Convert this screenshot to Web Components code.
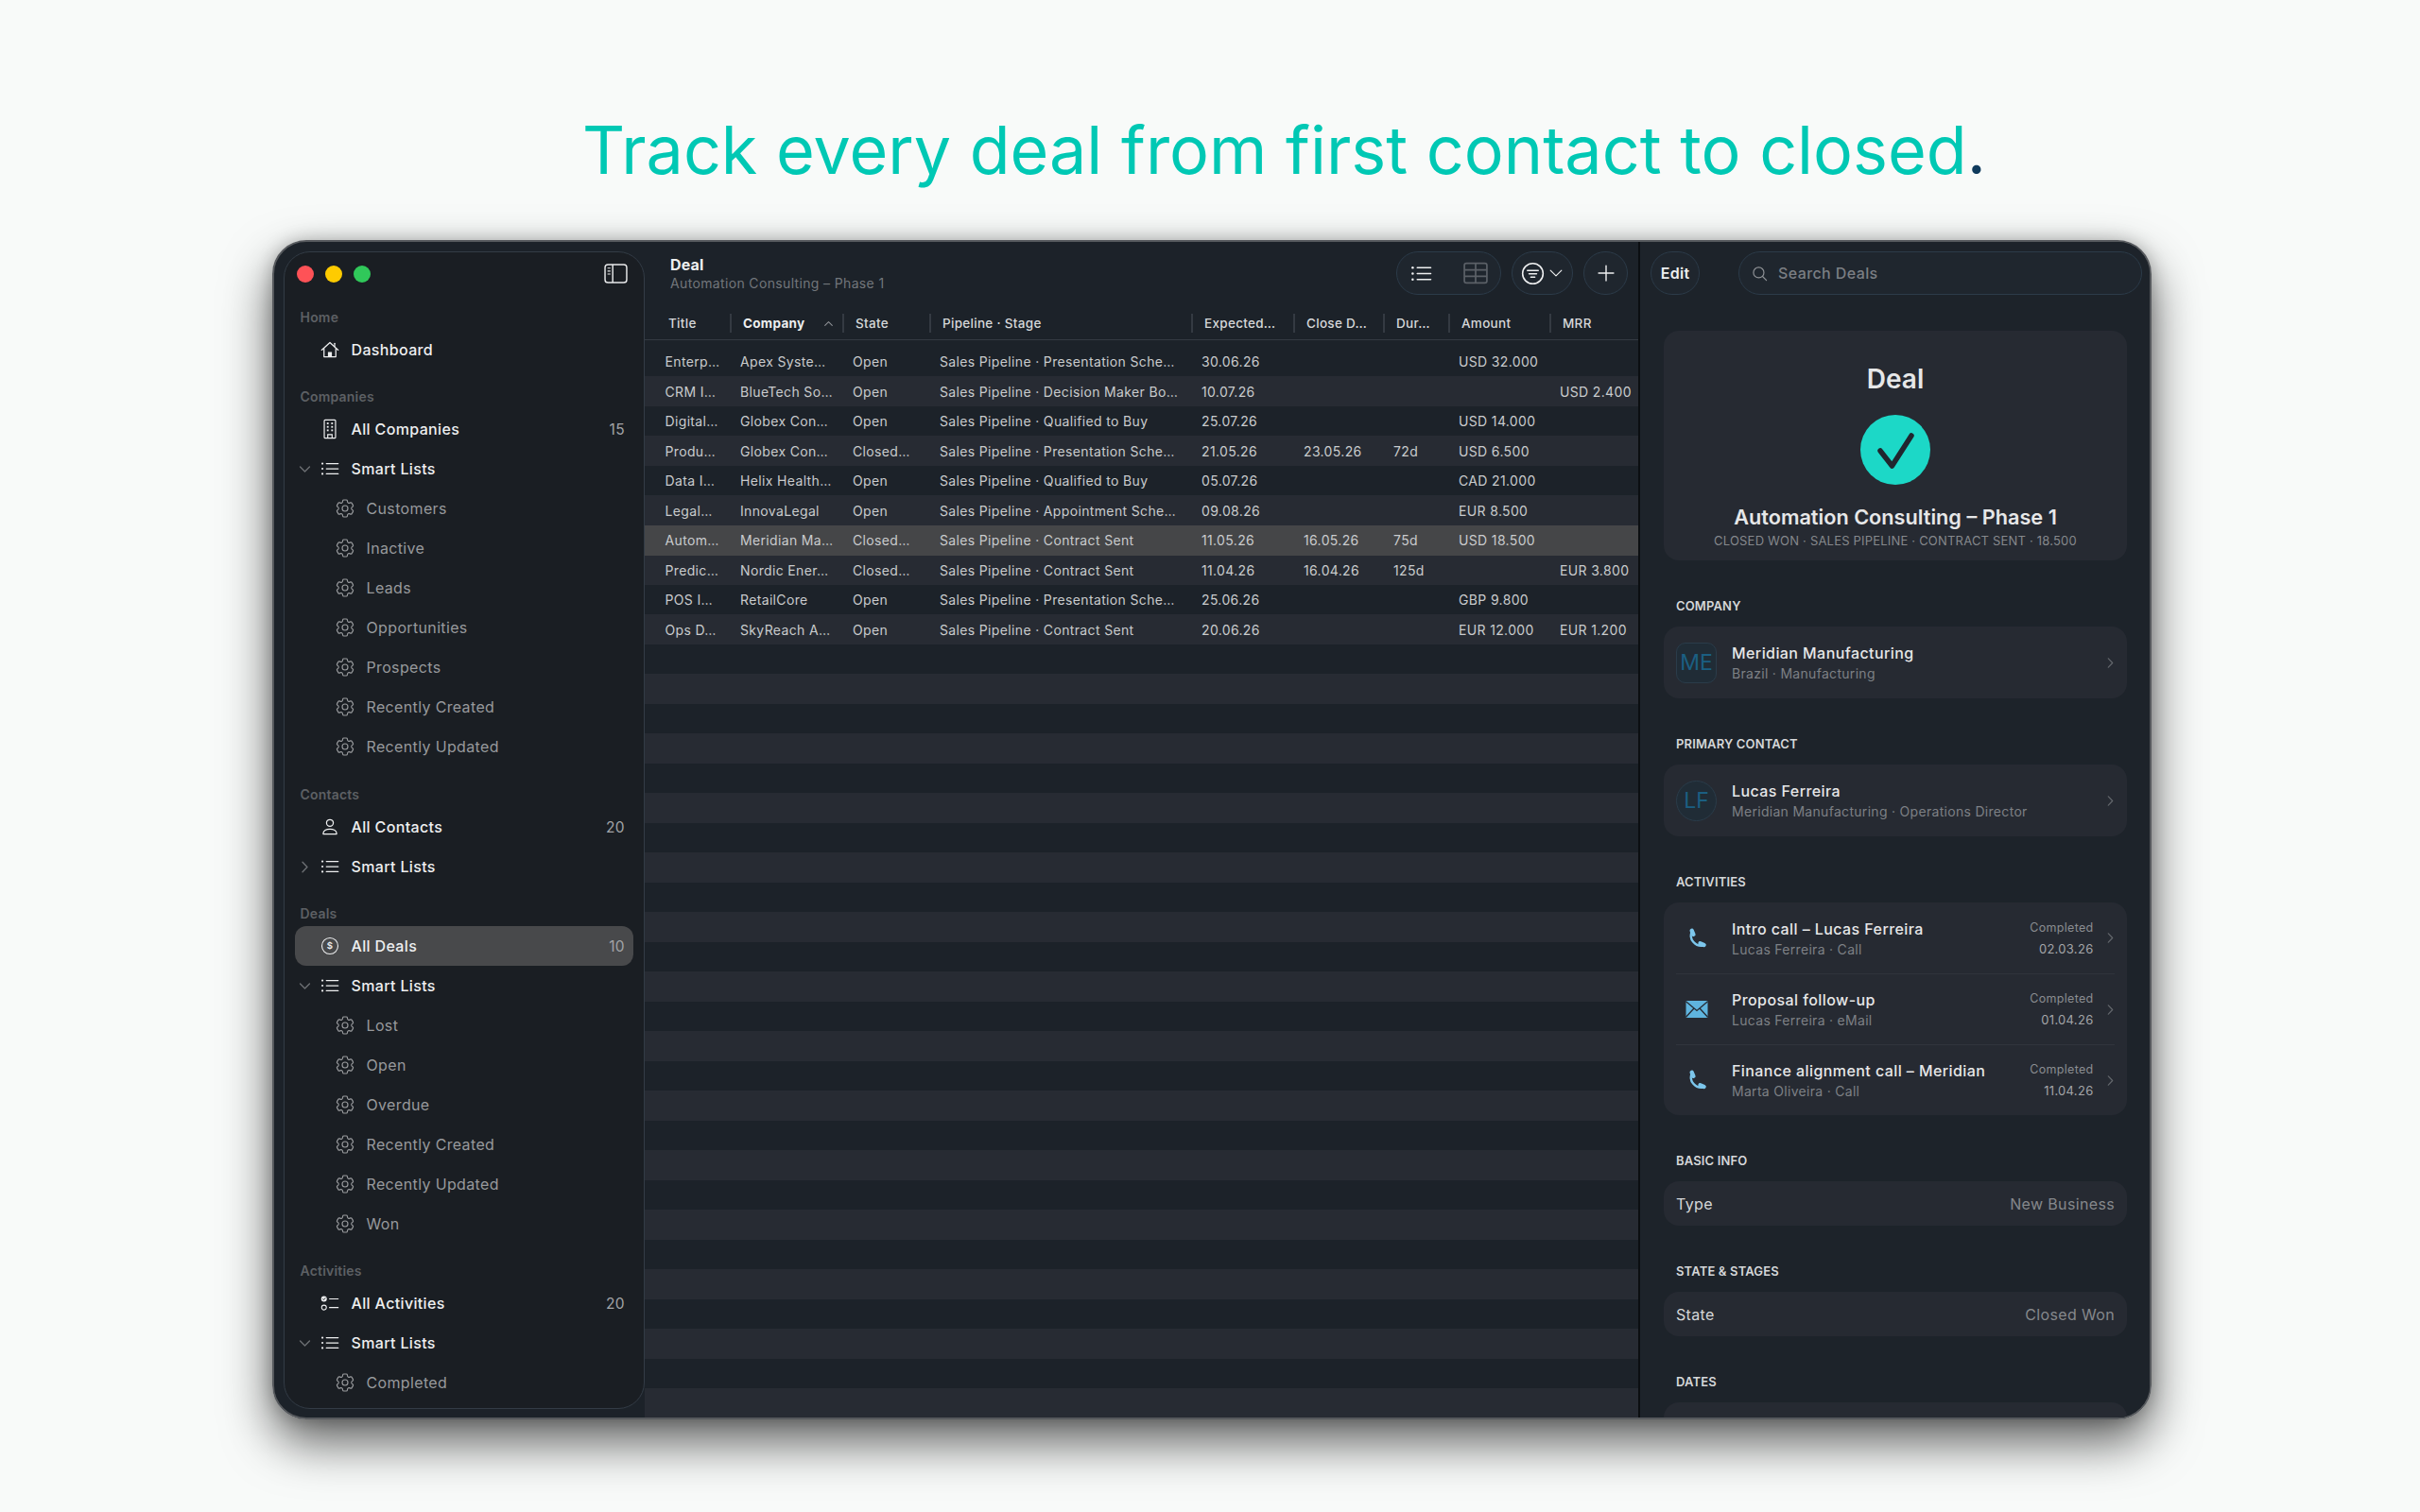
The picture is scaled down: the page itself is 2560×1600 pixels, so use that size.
<!DOCTYPE html>
<html lang="en">
<head>
<meta charset="utf-8">
<title>Deals</title>
<style>
  html, body { margin: 0; background: #f8faf9; }
  body { font-family: Inter, "Noto Sans", sans-serif; height: 1600px; overflow: hidden; }
</style>
</head>
<body>
<deal-page>
  <page-headline>Track every deal from first contact to closed</page-headline>
  <app-window>
    <app-sidebar slot="sidebar">
      <nav-section label="Home">
        <nav-item icon="house">Dashboard</nav-item>
      </nav-section>
      <nav-section label="Companies">
        <nav-item icon="building" count="15">All Companies</nav-item>
        <nav-item icon="list" chevron="down">Smart Lists</nav-item>
        <nav-item icon="gear" sub>Customers</nav-item>
        <nav-item icon="gear" sub>Inactive</nav-item>
        <nav-item icon="gear" sub>Leads</nav-item>
        <nav-item icon="gear" sub>Opportunities</nav-item>
        <nav-item icon="gear" sub>Prospects</nav-item>
        <nav-item icon="gear" sub>Recently Created</nav-item>
        <nav-item icon="gear" sub>Recently Updated</nav-item>
      </nav-section>
      <nav-section label="Contacts" style="margin-top: 17px">
        <nav-item icon="person" count="20">All Contacts</nav-item>
        <nav-item icon="list" chevron="right">Smart Lists</nav-item>
      </nav-section>
      <nav-section label="Deals">
        <nav-item icon="dollar" count="10" selected>All Deals</nav-item>
        <nav-item icon="list" chevron="down">Smart Lists</nav-item>
        <nav-item icon="gear" sub>Lost</nav-item>
        <nav-item icon="gear" sub>Open</nav-item>
        <nav-item icon="gear" sub>Overdue</nav-item>
        <nav-item icon="gear" sub>Recently Created</nav-item>
        <nav-item icon="gear" sub>Recently Updated</nav-item>
        <nav-item icon="gear" sub>Won</nav-item>
      </nav-section>
      <nav-section label="Activities">
        <nav-item icon="tasks" count="20">All Activities</nav-item>
        <nav-item icon="list" chevron="down">Smart Lists</nav-item>
        <nav-item icon="gear" sub>Completed</nav-item>
      </nav-section>
    </app-sidebar>
    <deal-list slot="main"></deal-list>
    <deal-detail slot="detail">
      <deal-hero></deal-hero>
      <detail-section label="Company">
        <detail-card>
          <link-row initials="ME" shape="square" title="Meridian Manufacturing" sub="Brazil · Manufacturing"></link-row>
        </detail-card>
      </detail-section>
      <detail-section label="Primary Contact">
        <detail-card>
          <link-row initials="LF" shape="round" title="Lucas Ferreira" sub="Meridian Manufacturing · Operations Director"></link-row>
        </detail-card>
      </detail-section>
      <detail-section label="Activities">
        <detail-card>
          <link-row icon="phone" title="Intro call – Lucas Ferreira" sub="Lucas Ferreira · Call" state="Completed" date="02.03.26"></link-row>
          <link-row icon="mail" divided title="Proposal follow-up" sub="Lucas Ferreira · eMail" state="Completed" date="01.04.26"></link-row>
          <link-row icon="phone" divided title="Finance alignment call – Meridian" sub="Marta Oliveira · Call" state="Completed" date="11.04.26"></link-row>
        </detail-card>
      </detail-section>
      <detail-section label="Basic Info">
        <detail-card><field-row label="Type" value="New Business"></field-row></detail-card>
      </detail-section>
      <detail-section label="State &amp; Stages">
        <detail-card><field-row label="State" value="Closed Won"></field-row></detail-card>
      </detail-section>
      <detail-section label="Dates">
        <detail-card><field-row label="Created Date" value="02.02.26"></field-row></detail-card>
      </detail-section>
    </deal-detail>
  </app-window>
</deal-page>

<script>
const GEAR = "M9.594 3.94c.09-.542.56-.94 1.11-.94h2.593c.55 0 1.02.398 1.11.94l.213 1.281c.063.374.313.686.645.87.074.04.147.083.22.127.325.196.72.257 1.075.124l1.217-.456a1.125 1.125 0 0 1 1.37.49l1.296 2.247a1.125 1.125 0 0 1-.26 1.431l-1.003.827c-.293.241-.438.613-.43.992a7.723 7.723 0 0 1 0 .255c-.008.378.137.75.43.991l1.004.827c.424.35.534.955.26 1.43l-1.298 2.247a1.125 1.125 0 0 1-1.369.491l-1.217-.456c-.355-.133-.75-.072-1.076.124a6.47 6.47 0 0 1-.22.128c-.331.183-.581.495-.644.869l-.213 1.281c-.09.543-.56.94-1.11.94h-2.594c-.55 0-1.019-.398-1.11-.94l-.213-1.281c-.062-.374-.312-.686-.644-.87a6.52 6.52 0 0 1-.22-.127c-.325-.196-.72-.257-1.076-.124l-1.217.456a1.125 1.125 0 0 1-1.369-.49l-1.297-2.247a1.125 1.125 0 0 1 .26-1.431l1.004-.827c.292-.24.437-.613.43-.991a6.932 6.932 0 0 1 0-.255c.007-.38-.138-.751-.43-.992l-1.004-.827a1.125 1.125 0 0 1-.26-1.43l1.297-2.247a1.125 1.125 0 0 1 1.37-.491l1.216.456c.356.133.751.072 1.076-.124.072-.044.146-.086.22-.128.332-.183.582-.495.644-.869l.214-1.28Z";

const ICONS = {
  gear: `<g fill="none" stroke="currentColor" stroke-width="1.15"><path d="${GEAR}"/><circle cx="12" cy="12" r="3"/></g>`,
  house: `<g fill="none" stroke="currentColor" stroke-width="1.5" stroke-linecap="round" stroke-linejoin="round"><path d="M1.5 12.5 12 3l10.5 9.5"/><path d="M18 4v4"/><path d="M4.5 10.5V21h15V10.5"/></g><path d="M9.5 21v-6h5v6z" fill="currentColor"/>`,
  building: `<g fill="none" stroke="currentColor" stroke-width="1.3"><rect x="5.5" y="1.5" width="13" height="21" rx="1"/><path d="M9.5 22.5v-4h5v4"/></g><g fill="currentColor"><rect x="8.5" y="4.5" width="2" height="2"/><rect x="13.5" y="4.5" width="2" height="2"/><rect x="8.5" y="8.5" width="2" height="2"/><rect x="13.5" y="8.5" width="2" height="2"/><rect x="8.5" y="12.5" width="2" height="2"/><rect x="13.5" y="12.5" width="2" height="2"/></g>`,
  list: `<g stroke="currentColor" stroke-width="1.5" stroke-linecap="round"><path d="M7.5 5.5h15M7.5 12h15M7.5 18.5h15"/></g><g fill="currentColor"><circle cx="2.5" cy="5.5" r="1.3"/><circle cx="2.5" cy="12" r="1.3"/><circle cx="2.5" cy="18.5" r="1.3"/></g>`,
  person: `<g fill="none" stroke="currentColor" stroke-width="1.5" stroke-linejoin="round"><circle cx="12" cy="7" r="4.3"/><path d="M3.5 20.5c0-3.6 3.8-5.8 8.5-5.8s8.5 2.2 8.5 5.8v.5h-17z"/></g>`,
  dollar: `<circle cx="12" cy="12" r="10.2" fill="none" stroke="currentColor" stroke-width="1.3"/><text x="12" y="16" text-anchor="middle" font-size="11.5" font-weight="600" fill="currentColor" font-family="Inter, sans-serif">$</text>`,
  tasks: `<g fill="none" stroke="currentColor" stroke-width="1.3"><circle cx="4.5" cy="17.5" r="3"/><path d="M11 6.5h12M11 17.5h12"/></g><circle cx="4.5" cy="6.5" r="3.6" fill="currentColor"/><path d="M2.9 6.5l1.2 1.3 2.2-2.6" fill="none" stroke="#1a1e23" stroke-width="1.1"/>`,
  panel: `<g fill="none" stroke="currentColor" stroke-width="1.4"><rect x="1" y="2.8" width="22" height="18.4" rx="3"/><path d="M8.8 2.8v18.4"/></g><path d="M3.5 6.5h3M3.5 9.5h3M3.5 12.5h3" stroke="currentColor" stroke-width="1.1"/>`,
  filter: `<g fill="none" stroke="currentColor" stroke-linecap="round"><circle cx="12" cy="12" r="10.4" stroke-width="1.5"/><path d="M6.5 8.8h11M8.2 12.2h7.6M10 15.6h4" stroke-width="1.5"/></g>`,
  table: `<g fill="none" stroke="currentColor" stroke-width="1.6"><rect x="1" y="2.5" width="22" height="19" rx="2"/><path d="M1 8.8h22M1 15.2h22M12 2.5v19"/></g>`,
  plus: `<path d="M12 2.5v19M2.5 12h19" stroke="currentColor" stroke-width="1.7" stroke-linecap="round"/>`,
  search: `<g fill="none" stroke="currentColor" stroke-width="1.7" stroke-linecap="round"><circle cx="10.5" cy="10.5" r="7.8"/><path d="M16.3 16.3 22 22"/></g>`,
  phone: `<g fill="none" stroke="currentColor" stroke-linecap="round"><path d="M7 4.5C4.8 8.5 5.6 12.6 8.3 15.8c2.6 3 6.2 4.6 10.4 3.9" stroke-width="2.4"/><path d="M6.7 3.8 8.4 7.8M15.5 17.3 19.6 19" stroke-width="4.4"/></g>`,
  mail: `<rect x="0.5" y="3" width="23" height="18" rx="1" fill="currentColor"/><path d="M0.5 3.8 12 13.5 23.5 3.8M0.5 20.2 9 11M23.5 20.2 15 11" fill="none" stroke="#262a32" stroke-width="1.3"/>`,
  "chevron-down": `<path d="M5 8.5l7 7 7-7" fill="none" stroke="currentColor" stroke-width="2" stroke-linecap="round" stroke-linejoin="round"/>`,
  "chevron-thin": `<path d="M5 8.5l7 7 7-7" fill="none" stroke="currentColor" stroke-width="1.4" stroke-linecap="round" stroke-linejoin="round"/>`,
  "chevron-right": `<path d="M8.5 4.5l7 7.5-7 7.5" fill="none" stroke="currentColor" stroke-width="2" stroke-linecap="round" stroke-linejoin="round"/>`,
  "chevron-up": `<path d="M5 15.5l7-7 7 7" fill="none" stroke="currentColor" stroke-width="2" stroke-linecap="round" stroke-linejoin="round"/>`,
};

class UiIcon extends HTMLElement {
  connectedCallback() {
    const size = this.getAttribute("size") || 18;
    const root = this.shadowRoot || this.attachShadow({ mode: "open" });
    root.innerHTML = `
      <style>
        :host { display: inline-flex; align-items: center; justify-content: center; flex: none; }
        svg { display: block; overflow: visible; }
      </style>
      <svg width="${size}" height="${size}" viewBox="0 0 24 24">${ICONS[this.getAttribute("name")] || ""}</svg>`;
  }
}
customElements.define("ui-icon", UiIcon);

class DealPage extends HTMLElement {
  constructor() {
    super();
    this.attachShadow({ mode: "open" }).innerHTML = `
      <style>
        :host { display: block; width: 2560px; height: 1600px; color: #e8e9ea; }
      </style>
      <slot></slot>`;
  }
}
customElements.define("deal-page", DealPage);

class PageHeadline extends HTMLElement {
  constructor() {
    super();
    this.attachShadow({ mode: "open" }).innerHTML = `
      <style>
        :host { display: block; height: 254px; box-sizing: border-box; padding: 117px 0 0 616px; }
        h1 { margin: 0; font-size: 70px; line-height: 84px; font-weight: 400; color: #00c8b4; white-space: nowrap; }
        span { color: #0f3a5c; }
      </style>
      <h1><slot></slot><span>.</span></h1>`;
  }
}
customElements.define("page-headline", PageHeadline);

class AppWindow extends HTMLElement {
  constructor() {
    super();
    this.attachShadow({ mode: "open" }).innerHTML = `
      <style>
        :host { display: block; width: 1988px; height: 1248px; margin-left: 288px; }
        .frame {
          box-sizing: border-box; width: 100%; height: 100%; display: flex; overflow: hidden;
          border: 2px solid #56595d; border-radius: 36px; background: #1c2229;
        }
        .shadow { border-radius: 36px; box-shadow: 0 24px 52px rgba(0,0,0,.62), 0 0 18px rgba(0,0,0,.22); height: 100%; }
      </style>
      <div class="shadow"><div class="frame">
        <slot name="sidebar"></slot>
        <slot name="main"></slot>
        <slot name="detail"></slot>
      </div></div>`;
  }
}
customElements.define("app-window", AppWindow);

class AppSidebar extends HTMLElement {
  constructor() {
    super();
    this.attachShadow({ mode: "open" }).innerHTML = `
      <style>
        :host {
          display: block; flex: none; box-sizing: border-box; width: 382px; margin: 10px 0 9px 10px;
          background: #1a1e23; border: 1.5px solid #333c46; border-radius: 28px; padding: 0 11px 0 10.5px; overflow: hidden;
        }
        .bar { height: 45px; margin-bottom: 11px; display: flex; align-items: center; gap: 12px; padding-left: 2.5px; }
        .dot { width: 18px; height: 18px; border-radius: 50%; }
        ui-icon { margin-left: auto; margin-right: 6px; color: #e8e9ea; }
      </style>
      <div class="bar">
        <span class="dot" style="background:#fe5257"></span>
        <span class="dot" style="background:#fecb00"></span>
        <span class="dot" style="background:#30c85a"></span>
        <ui-icon name="panel" size="25"></ui-icon>
      </div>
      <slot></slot>`;
  }
}
customElements.define("app-sidebar", AppSidebar);

class NavSection extends HTMLElement {
  constructor() {
    super();
    this.attachShadow({ mode: "open" }).innerHTML = `
      <style>
        :host { display: block; margin-bottom: 16px; }
        .label { height: 26px; line-height: 26px; padding-left: 6px; font-size: 14px; font-weight: 600; color: #5d6064; letter-spacing: .2px; }
      </style>
      <div class="label"></div>
      <slot></slot>`;
  }
  connectedCallback() {
    this.shadowRoot.querySelector(".label").textContent = this.getAttribute("label");
  }
}
customElements.define("nav-section", NavSection);

class NavItem extends HTMLElement {
  connectedCallback() {
    const sub = this.hasAttribute("sub");
    const name = this.getAttribute("icon");
    const chevron = this.getAttribute("chevron");
    const count = this.getAttribute("count");
    const size = sub ? 24 : name === "building" ? 22 : 20;
    const root = this.attachShadow({ mode: "open" });
    root.innerHTML = `
      <style>
        :host {
          display: flex; align-items: center; height: 42px; font-size: 16px; font-weight: 500;
          letter-spacing: .35px; color: #eeeff0; border-radius: 12px;
        }
        :host([sub]) { color: #97999c; font-weight: 400; }
        :host([selected]) { background: #48494b; }
        .chev { width: 22px; flex: none; display: flex; justify-content: center; color: #6b6e72; }
        .icon { width: 30px; flex: none; display: flex; justify-content: center; }
        .text { margin-left: 8px; flex: 1; white-space: nowrap; }
        .count { margin-right: 9px; color: #a2a4a7; font-weight: 400; font-size: 15.5px; }
      </style>
      <span class="chev" style="${sub ? "width:38px" : ""}">${chevron ? `<ui-icon name="chevron-${chevron}" size="17"></ui-icon>` : ""}</span>
      <span class="icon"><ui-icon name="${name}" size="${size}"></ui-icon></span>
      <span class="text"><slot></slot></span>
      ${count ? `<span class="count">${count}</span>` : ""}`;
  }
}
customElements.define("nav-item", NavItem);

class ToolPill extends HTMLElement {
  constructor() {
    super();
    this.attachShadow({ mode: "open" }).innerHTML = `
      <style>
        :host {
          display: flex; align-items: center; box-sizing: border-box; height: 46px; flex: none;
          border: 1.5px solid #2c3b49; border-radius: 23px; background: #1f262e; color: #eeeff0;
        }
      </style>
      <slot></slot>`;
  }
}
customElements.define("tool-pill", ToolPill);

const COLUMNS = [
  ["Title", 90], ["Company", 119], ["State", 92], ["Pipeline · Stage", 277],
  ["Expected…", 108], ["Close D…", 95], ["Dur…", 69], ["Amount", 107], ["MRR", 94],
];
const DEALS = [
  ["Enterp…", "Apex Syste…", "Open", "Sales Pipeline · Presentation Sche…", "30.06.26", "", "", "USD 32.000", ""],
  ["CRM I…", "BlueTech So…", "Open", "Sales Pipeline · Decision Maker Bo…", "10.07.26", "", "", "", "USD 2.400"],
  ["Digital…", "Globex Con…", "Open", "Sales Pipeline · Qualified to Buy", "25.07.26", "", "", "USD 14.000", ""],
  ["Produ…", "Globex Con…", "Closed…", "Sales Pipeline · Presentation Sche…", "21.05.26", "23.05.26", "72d", "USD 6.500", ""],
  ["Data I…", "Helix Health…", "Open", "Sales Pipeline · Qualified to Buy", "05.07.26", "", "", "CAD 21.000", ""],
  ["Legal…", "InnovaLegal", "Open", "Sales Pipeline · Appointment Sche…", "09.08.26", "", "", "EUR 8.500", ""],
  ["Autom…", "Meridian Ma…", "Closed…", "Sales Pipeline · Contract Sent", "11.05.26", "16.05.26", "75d", "USD 18.500", ""],
  ["Predic…", "Nordic Ener…", "Closed…", "Sales Pipeline · Contract Sent", "11.04.26", "16.04.26", "125d", "", "EUR 3.800"],
  ["POS I…", "RetailCore", "Open", "Sales Pipeline · Presentation Sche…", "25.06.26", "", "", "GBP 9.800", ""],
  ["Ops D…", "SkyReach A…", "Open", "Sales Pipeline · Contract Sent", "20.06.26", "", "", "EUR 12.000", "EUR 1.200"],
];

class DealList extends HTMLElement {
  connectedCallback() {
    const grid = COLUMNS.map((c) => c[1] + "px").join(" ");
    const head = COLUMNS.map((c, i) => `
      <div class="th ${i === 1 ? "sorted" : ""}">
        <span>${c[0]}</span>
        ${i === 1 ? '<ui-icon name="chevron-up" size="13"></ui-icon>' : ""}
      </div>`).join("");
    const rows = DEALS.map((d, i) => `
      <div class="row ${i === 6 ? "selected" : ""}">
        ${d.map((v) => `<div class="td">${v}</div>`).join("")}
      </div>`).join("");
    this.attachShadow({ mode: "open" }).innerHTML = `
      <style>
        :host { display: flex; flex-direction: column; flex: none; width: 1051px; min-height: 0; }
        .top { display: flex; align-items: center; gap: 11px; height: 46px; margin-top: 10px; padding: 0 11px 0 27px; flex: none; }
        .heading { flex: 1; padding-top: 3px; }
        .heading b { display: block; font-size: 16px; line-height: 19px; font-weight: 700; color: #eeeff0; margin-top: -1px; letter-spacing: .15px; }
        .heading small { display: block; font-size: 14px; line-height: 20px; color: #72767b; letter-spacing: .35px; }
        .seg { width: 111px; justify-content: space-between; padding: 0 13px 0 14px; }
        .filter { width: 65px; padding-left: 9px; gap: 1.5px; }
        .plus { width: 47px; justify-content: center; }
        .muted { color: #5b6067; }
        .head { display: grid; grid-template-columns: ${grid}; height: 34px; margin-top: 13px; border-bottom: 1.5px solid #343a42; flex: none; }
        .th {
          display: flex; align-items: center; position: relative; padding-left: 14px;
          font-size: 13.5px; font-weight: 500; color: #d6d8da; white-space: nowrap; letter-spacing: .3px;
        }
        .th:first-child { padding-left: 25px; }
        .th + .th::before { content: ""; position: absolute; left: 0; top: 7px; bottom: 7px; width: 1.5px; background: #343a42; }
        .sorted { font-weight: 700; color: #eeeff0; }
        .sorted ui-icon { margin-left: auto; margin-right: 8px; color: #8d9095; }
        .body {
          flex: 1; margin-top: 7px;
          background: repeating-linear-gradient(#1c2229 0 31.5px, #272b33 31.5px 63px);
        }
        .row { display: grid; grid-template-columns: ${grid}; height: 31.5px; align-items: center; font-size: 14px; letter-spacing: .35px; color: #c9cbcd; }
        .row.selected { background: #454648; }
        .td { padding-left: 11px; white-space: nowrap; overflow: hidden; }
        .td:first-child { padding-left: 21.5px; }
      </style>
      <div class="top">
        <div class="heading"><b>Deal</b><small>Automation Consulting – Phase 1</small></div>
        <tool-pill class="seg"><ui-icon name="list" size="23"></ui-icon><ui-icon class="muted" name="table" size="26"></ui-icon></tool-pill>
        <tool-pill class="filter"><ui-icon name="filter" size="25"></ui-icon><ui-icon name="chevron-thin" size="20"></ui-icon></tool-pill>
        <tool-pill class="plus"><ui-icon name="plus" size="20"></ui-icon></tool-pill>
      </div>
      <div class="head">${head}</div>
      <div class="body">${rows}</div>`;
  }
}
customElements.define("deal-list", DealList);

class DealDetail extends HTMLElement {
  constructor() {
    super();
    this.attachShadow({ mode: "open" }).innerHTML = `
      <style>
        :host { display: block; box-sizing: border-box; flex: none; width: 541px; border-left: 2px solid #0b0e11; background: #1d232a; overflow: hidden; }
        .top { display: flex; height: 46px; margin-top: 10px; padding: 0 8px 0 11px; justify-content: space-between; }
        .edit { width: 52px; justify-content: center; font-size: 16px; font-weight: 600; letter-spacing: .3px; }
        .search { width: 427px; padding-left: 13px; gap: 11px; font-size: 16px; font-weight: 500; letter-spacing: .4px; color: #7b7f84; }
        .search ui-icon { color: #8e9195; }
        .content { margin: 38px 24px 0 25px; }
      </style>
      <div class="top">
        <tool-pill class="edit">Edit</tool-pill>
        <tool-pill class="search"><ui-icon name="search" size="17"></ui-icon>Search Deals</tool-pill>
      </div>
      <div class="content"><slot></slot></div>`;
  }
}
customElements.define("deal-detail", DealDetail);

class DealHero extends HTMLElement {
  constructor() {
    super();
    this.attachShadow({ mode: "open" }).innerHTML = `
      <style>
        :host {
          display: flex; flex-direction: column; align-items: center; box-sizing: border-box; height: 243px;
          padding-top: 34px; background: #262a32; border-radius: 16px; text-align: center;
        }
        h2 { margin: 0; font-size: 28px; line-height: 34px; font-weight: 600; color: #e6e7e8; }
        .badge { width: 74px; height: 74px; margin-top: 21px; }
        h3 { margin: 20px 0 0; font-size: 21.7px; line-height: 28px; font-weight: 600; color: #e6e7e8; white-space: nowrap; }
        p { margin: 3px 0 0; font-size: 13px; line-height: 16px; letter-spacing: .2px; color: #85888c; white-space: nowrap; }
      </style>
      <h2>Deal</h2>
      <svg class="badge" viewBox="0 0 74 74"><circle cx="37" cy="37" r="37" fill="#1cd8c7"/><path d="M21 38 33.5 54 54 22" fill="none" stroke="#20262e" stroke-width="5.5" stroke-linecap="round" stroke-linejoin="round"/></svg>
      <h3>Automation Consulting – Phase 1</h3>
      <p>CLOSED WON · SALES PIPELINE · CONTRACT SENT · 18.500</p>`;
  }
}
customElements.define("deal-hero", DealHero);

class DetailSection extends HTMLElement {
  connectedCallback() {
    this.attachShadow({ mode: "open" }).innerHTML = `
      <style>
        :host { display: block; margin-top: 40px; }
        .label { height: 16px; line-height: 16px; margin: 0 0 14px 13px; font-size: 13px; font-weight: 600; letter-spacing: .15px; color: #d5d7d9; text-transform: uppercase; }
      </style>
      <div class="label">${this.getAttribute("label").replace("&", "&amp;")}</div>
      <slot></slot>`;
  }
}
customElements.define("detail-section", DetailSection);

class DetailCard extends HTMLElement {
  constructor() {
    super();
    this.attachShadow({ mode: "open" }).innerHTML = `
      <style>
        :host { display: block; background: #262a32; border-radius: 16px; padding: 0 13px; }
      </style>
      <slot></slot>`;
  }
}
customElements.define("detail-card", DetailCard);

class LinkRow extends HTMLElement {
  connectedCallback() {
    const get = (n) => this.getAttribute(n) || "";
    const lead = get("icon")
      ? `<ui-icon class="${get("icon")}" name="${get("icon")}" size="24"></ui-icon>`
      : `<span class="avatar ${get("shape")}">${get("initials")}</span>`;
    this.attachShadow({ mode: "open" }).innerHTML = `
      <style>
        :host { display: flex; align-items: center; height: 76px; box-sizing: border-box; }
        :host([icon]) { height: 75px; }
        :host([divided]) { border-top: 1.5px solid #30343c; }
        .lead { width: 43px; flex: none; display: flex; justify-content: center; margin-right: 16px; }
        .phone { color: #7cc6ec; }
        .mail { color: #5fb4de; }
        .avatar {
          box-sizing: border-box; width: 43px; height: 43px; display: flex; align-items: center; justify-content: center;
          background: #202c36; border: 1.5px solid #2a3c4a; font-size: 23px; color: #1b5f82;
        }
        .square { border-radius: 10px; }
        .round { border-radius: 50%; }
        .main { flex: 1; min-width: 0; padding-top: 2px; }
        .title { font-size: 16px; line-height: 21px; font-weight: 500; letter-spacing: .42px; color: #e6e7e8; white-space: nowrap; }
        .sub { font-size: 14px; line-height: 21px; letter-spacing: .3px; color: #7d8085; white-space: nowrap; }
        .side { text-align: right; font-size: 12.5px; line-height: 23px; letter-spacing: .3px; color: #8a8d91; margin-right: 10.5px; }
        .side div + div { font-size: 13px; color: #a3a5a8; }
        .chev { color: #62666b; flex: none; margin-right: -3px; }
      </style>
      <span class="lead">${lead}</span>
      <div class="main"><div class="title">${get("title")}</div><div class="sub">${get("sub")}</div></div>
      ${get("state") ? `<div class="side"><div>${get("state")}</div><div>${get("date")}</div></div>` : ""}
      <ui-icon class="chev" name="chevron-right" size="15"></ui-icon>`;
  }
}
customElements.define("link-row", LinkRow);

class FieldRow extends HTMLElement {
  connectedCallback() {
    this.attachShadow({ mode: "open" }).innerHTML = `
      <style>
        :host { display: flex; align-items: center; justify-content: space-between; height: 47px; font-size: 16px; letter-spacing: .35px; }
        .k { color: #d5d7d9; }
        .v { color: #85888c; }
      </style>
      <span class="k">${this.getAttribute("label")}</span>
      <span class="v">${this.getAttribute("value")}</span>`;
  }
}
customElements.define("field-row", FieldRow);
</script>
</body>
</html>
